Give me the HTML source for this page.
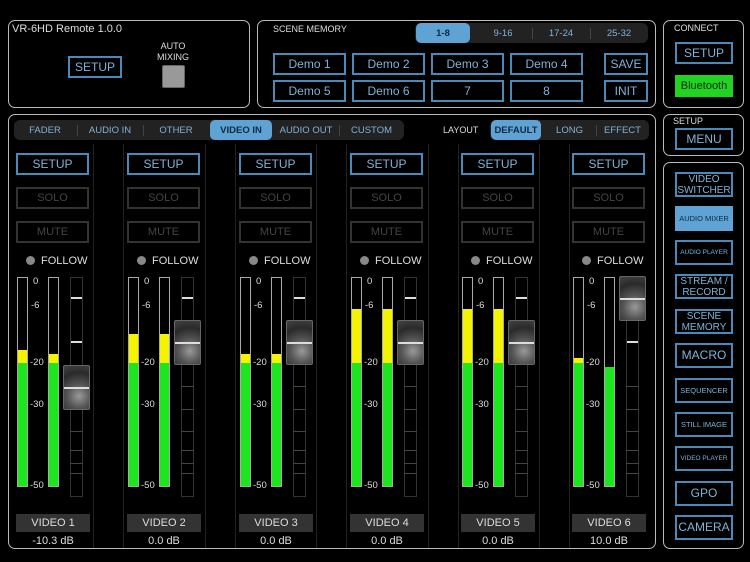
<!DOCTYPE html>
<html><head><meta charset="utf-8"><style>
*{margin:0;padding:0;box-sizing:border-box}
body{width:750px;height:562px;background:#000;position:relative;overflow:hidden;font-family:"Liberation Sans",sans-serif;color:#ddd}
.a{position:absolute}
.box{position:absolute;border:1.5px solid #bbb;border-radius:7px}
.btn{position:absolute;border:2px solid #4a8ab8;color:#7fb2d8;font-size:12px;display:flex;align-items:center;justify-content:center;text-align:center;line-height:11px}
.gbtn{position:absolute;border:2px solid #333;color:#444;font-size:11px;display:flex;align-items:center;justify-content:center}
.lbl{position:absolute;font-size:9px;color:#ddd}
.tabs{position:absolute;background:#222;border-radius:6px;height:20px}
.tab{position:absolute;top:0;height:20px;font-size:9.5px;color:#7fb2d8;display:flex;align-items:center;justify-content:center}
.tab.on{background:#5ea3d4;color:#0c2a44;border-radius:5px;font-weight:bold}
.sep{position:absolute;top:5px;width:1px;height:11px;background:#444}
.ch{position:absolute;top:0;left:0;width:75px;height:562px}
.met{position:absolute;top:277px;width:11px;height:210px;border:1px solid #aaa;background:#000}
.g{position:absolute;left:0;right:0;bottom:0;background:#1ee61e}
.y{position:absolute;left:0;right:0;background:#f4f400}
.sc{position:absolute;font-size:9.5px;color:#ddd}
.trk{position:absolute;left:54px;top:277px;width:13px;height:220px;border:1px solid #333}
.tk{position:absolute;left:54px;width:13px;height:1px;background:#444}
.tw{position:absolute;left:55px;width:11px;height:2px;background:#ddd}
.knob{position:absolute;left:47px;width:27px;height:45px;border-radius:2px;background:radial-gradient(circle at 60% 70%,#999 0,#555 35%,#2a2a2a 70%,#444 100%);border:1px solid #666}
.knob:after{content:"";position:absolute;left:0;right:0;top:21px;height:2px;background:#ddd}
.name{position:absolute;left:0;top:514px;width:74px;height:18px;background:#333;color:#ddd;font-size:11px;display:flex;align-items:center;justify-content:center}
.db{position:absolute;left:0;top:535px;width:74px;text-align:center;font-size:11px;color:#ddd}
.fol{position:absolute;top:255px;left:10px;font-size:11px;color:#ddd}
.fol i{display:inline-block;width:9px;height:9px;border-radius:50%;background:#888;margin-right:6px;vertical-align:-1px}
.vl{position:absolute;top:144px;width:1px;height:404px;background:#222}
</style></head><body>
<div class="box" style="left:8px;top:20px;width:242px;height:88px"></div>
<div class="a" style="left:12px;top:23px;font-size:11px;color:#ddd">VR-6HD Remote 1.0.0</div>
<div class="btn" style="left:68px;top:56px;width:54px;height:22px">SETUP</div>
<div class="lbl" style="left:155px;top:41px;width:36px;text-align:center;line-height:11px">AUTO<br>MIXING</div>
<div class="a" style="left:162px;top:65px;width:23px;height:23px;background:#999;border-radius:2px;border:1px solid #666"></div>

<div class="box" style="left:257px;top:20px;width:399px;height:88px"></div>
<div class="lbl" style="left:273px;top:24px">SCENE MEMORY</div>
<div class="tabs" style="left:415px;top:23px;width:233px">
<div class="tab on" style="left:1px;width:54px">1-8</div>
<div class="tab" style="left:59px;width:58px">9-16</div><div class="sep" style="left:117px"></div>
<div class="tab" style="left:117px;width:58px">17-24</div><div class="sep" style="left:175px"></div>
<div class="tab" style="left:175px;width:58px">25-32</div>
</div>
<div class="btn" style="left:273px;top:53px;width:73px;height:22px">Demo 1</div>
<div class="btn" style="left:352px;top:53px;width:73px;height:22px">Demo 2</div>
<div class="btn" style="left:431px;top:53px;width:73px;height:22px">Demo 3</div>
<div class="btn" style="left:510px;top:53px;width:73px;height:22px">Demo 4</div>
<div class="btn" style="left:604px;top:53px;width:44px;height:22px">SAVE</div>
<div class="btn" style="left:273px;top:80px;width:73px;height:22px">Demo 5</div>
<div class="btn" style="left:352px;top:80px;width:73px;height:22px">Demo 6</div>
<div class="btn" style="left:431px;top:80px;width:73px;height:22px">7</div>
<div class="btn" style="left:510px;top:80px;width:73px;height:22px">8</div>
<div class="btn" style="left:604px;top:80px;width:44px;height:22px">INIT</div>

<div class="box" style="left:663px;top:20px;width:81px;height:88px"></div>
<div class="lbl" style="left:674px;top:23px">CONNECT</div>
<div class="btn" style="left:675px;top:42px;width:58px;height:22px">SETUP</div>
<div class="a" style="left:675px;top:75px;width:58px;height:22px;background:#22d422;color:#0a2a0a;font-size:11px;display:flex;align-items:center;justify-content:center">Bluetooth</div>

<div class="box" style="left:663px;top:114px;width:81px;height:42px"></div>
<div class="lbl" style="left:673px;top:116px">SETUP</div>
<div class="btn" style="left:675px;top:128px;width:58px;height:22px">MENU</div>

<div class="box" style="left:663px;top:162px;width:81px;height:387px"></div>
<div class="btn" style="left:675px;top:172px;width:58px;height:25px;font-size:10px">VIDEO<br>SWITCHER</div>
<div class="a" style="left:675px;top:206px;width:58px;height:25px;background:#5ea3d4;color:#0c2a44;font-size:7.5px;display:flex;align-items:center;justify-content:center">AUDIO MIXER</div>
<div class="btn" style="left:675px;top:240px;width:58px;height:25px;font-size:6.5px">AUDIO PLAYER</div>
<div class="btn" style="left:675px;top:274px;width:58px;height:25px;font-size:10px">STREAM /<br>RECORD</div>
<div class="btn" style="left:675px;top:309px;width:58px;height:25px;font-size:10px">SCENE<br>MEMORY</div>
<div class="btn" style="left:675px;top:343px;width:58px;height:25px">MACRO</div>
<div class="btn" style="left:675px;top:378px;width:58px;height:25px;font-size:7.5px">SEQUENCER</div>
<div class="btn" style="left:675px;top:412px;width:58px;height:25px;font-size:7.5px">STILL IMAGE</div>
<div class="btn" style="left:675px;top:446px;width:58px;height:25px;font-size:6.5px">VIDEO PLAYER</div>
<div class="btn" style="left:675px;top:481px;width:58px;height:25px">GPO</div>
<div class="btn" style="left:675px;top:515px;width:58px;height:25px">CAMERA</div>

<div class="box" style="left:8px;top:114px;width:648px;height:435px"></div>
<div class="tabs" style="left:14px;top:120px;width:390px">
<div class="tab" style="left:0;width:62px">FADER</div><div class="sep" style="left:63px"></div>
<div class="tab" style="left:63px;width:66px">AUDIO IN</div><div class="sep" style="left:129px"></div>
<div class="tab" style="left:129px;width:66px">OTHER</div>
<div class="tab on" style="left:196px;width:62px">VIDEO IN</div>
<div class="tab" style="left:259px;width:66px">AUDIO OUT</div><div class="sep" style="left:325px"></div>
<div class="tab" style="left:325px;width:65px">CUSTOM</div>
</div>
<div class="lbl" style="left:443px;top:125px">LAYOUT</div>
<div class="tabs" style="left:490px;top:120px;width:159px">
<div class="tab on" style="left:1px;width:50px">DEFAULT</div>
<div class="tab" style="left:53px;width:53px">LONG</div><div class="sep" style="left:106px"></div>
<div class="tab" style="left:106px;width:53px">EFFECT</div>
</div>

<div class="vl" style="left:93px"></div><div class="vl" style="left:123px"></div>
<div class="vl" style="left:205px"></div><div class="vl" style="left:235px"></div>
<div class="vl" style="left:316px"></div><div class="vl" style="left:346px"></div>
<div class="vl" style="left:428px"></div><div class="vl" style="left:458px"></div>
<div class="vl" style="left:539px"></div><div class="vl" style="left:569px"></div>

<!-- channel template repeated -->
<div class="ch" style="left:16px">
<div class="btn" style="left:0;top:153px;width:73px;height:22px">SETUP</div>
<div class="gbtn" style="left:0;top:187px;width:73px;height:22px">SOLO</div>
<div class="gbtn" style="left:0;top:221px;width:73px;height:22px">MUTE</div>
<div class="fol"><i></i>FOLLOW</div>
<div class="met" style="left:1px"><div class="y" style="top:72px;bottom:0"></div><div class="g" style="top:85px"></div></div>
<div class="met" style="left:32px"><div class="y" style="top:76px;bottom:0"></div><div class="g" style="top:85px"></div></div>
<div class="sc" style="left:17px;top:276px">0</div><div class="sc" style="left:15px;top:300px">-6</div><div class="sc" style="left:14px;top:357px">-20</div><div class="sc" style="left:14px;top:399px">-30</div><div class="sc" style="left:14px;top:480px">-50</div>
<div class="trk"></div><div class="tw" style="top:297px"></div><div class="tw" style="top:341px"></div>
<div class="tk" style="top:431px"></div><div class="tk" style="top:450px"></div><div class="tk" style="top:463px"></div><div class="tk" style="top:473px"></div>
<div class="knob" style="top:365px"></div>
<div class="name">VIDEO 1</div><div class="db">-10.3 dB</div>
</div>

<div class="ch" style="left:127px">
<div class="btn" style="left:0;top:153px;width:73px;height:22px">SETUP</div>
<div class="gbtn" style="left:0;top:187px;width:73px;height:22px">SOLO</div>
<div class="gbtn" style="left:0;top:221px;width:73px;height:22px">MUTE</div>
<div class="fol"><i></i>FOLLOW</div>
<div class="met" style="left:1px"><div class="y" style="top:56px;bottom:0"></div><div class="g" style="top:85px"></div></div>
<div class="met" style="left:32px"><div class="y" style="top:56px;bottom:0"></div><div class="g" style="top:85px"></div></div>
<div class="sc" style="left:17px;top:276px">0</div><div class="sc" style="left:15px;top:300px">-6</div><div class="sc" style="left:14px;top:357px">-20</div><div class="sc" style="left:14px;top:399px">-30</div><div class="sc" style="left:14px;top:480px">-50</div>
<div class="trk"></div><div class="tw" style="top:297px"></div>
<div class="tk" style="top:386px"></div><div class="tk" style="top:409px"></div><div class="tk" style="top:431px"></div><div class="tk" style="top:450px"></div><div class="tk" style="top:463px"></div><div class="tk" style="top:473px"></div>
<div class="knob" style="top:320px"></div>
<div class="name">VIDEO 2</div><div class="db">0.0 dB</div>
</div>

<div class="ch" style="left:239px">
<div class="btn" style="left:0;top:153px;width:73px;height:22px">SETUP</div>
<div class="gbtn" style="left:0;top:187px;width:73px;height:22px">SOLO</div>
<div class="gbtn" style="left:0;top:221px;width:73px;height:22px">MUTE</div>
<div class="fol"><i></i>FOLLOW</div>
<div class="met" style="left:1px"><div class="y" style="top:76px;bottom:0"></div><div class="g" style="top:85px"></div></div>
<div class="met" style="left:32px"><div class="y" style="top:76px;bottom:0"></div><div class="g" style="top:85px"></div></div>
<div class="sc" style="left:17px;top:276px">0</div><div class="sc" style="left:15px;top:300px">-6</div><div class="sc" style="left:14px;top:357px">-20</div><div class="sc" style="left:14px;top:399px">-30</div><div class="sc" style="left:14px;top:480px">-50</div>
<div class="trk"></div><div class="tw" style="top:297px"></div>
<div class="tk" style="top:386px"></div><div class="tk" style="top:409px"></div><div class="tk" style="top:431px"></div><div class="tk" style="top:450px"></div><div class="tk" style="top:463px"></div><div class="tk" style="top:473px"></div>
<div class="knob" style="top:320px"></div>
<div class="name">VIDEO 3</div><div class="db">0.0 dB</div>
</div>

<div class="ch" style="left:350px">
<div class="btn" style="left:0;top:153px;width:73px;height:22px">SETUP</div>
<div class="gbtn" style="left:0;top:187px;width:73px;height:22px">SOLO</div>
<div class="gbtn" style="left:0;top:221px;width:73px;height:22px">MUTE</div>
<div class="fol"><i></i>FOLLOW</div>
<div class="met" style="left:1px"><div class="y" style="top:31px;bottom:0"></div><div class="g" style="top:85px"></div></div>
<div class="met" style="left:32px"><div class="y" style="top:31px;bottom:0"></div><div class="g" style="top:85px"></div></div>
<div class="sc" style="left:17px;top:276px">0</div><div class="sc" style="left:15px;top:300px">-6</div><div class="sc" style="left:14px;top:357px">-20</div><div class="sc" style="left:14px;top:399px">-30</div><div class="sc" style="left:14px;top:480px">-50</div>
<div class="trk"></div><div class="tw" style="top:297px"></div>
<div class="tk" style="top:386px"></div><div class="tk" style="top:409px"></div><div class="tk" style="top:431px"></div><div class="tk" style="top:450px"></div><div class="tk" style="top:463px"></div><div class="tk" style="top:473px"></div>
<div class="knob" style="top:320px"></div>
<div class="name">VIDEO 4</div><div class="db">0.0 dB</div>
</div>

<div class="ch" style="left:461px">
<div class="btn" style="left:0;top:153px;width:73px;height:22px">SETUP</div>
<div class="gbtn" style="left:0;top:187px;width:73px;height:22px">SOLO</div>
<div class="gbtn" style="left:0;top:221px;width:73px;height:22px">MUTE</div>
<div class="fol"><i></i>FOLLOW</div>
<div class="met" style="left:1px"><div class="y" style="top:31px;bottom:0"></div><div class="g" style="top:85px"></div></div>
<div class="met" style="left:32px"><div class="y" style="top:31px;bottom:0"></div><div class="g" style="top:85px"></div></div>
<div class="sc" style="left:17px;top:276px">0</div><div class="sc" style="left:15px;top:300px">-6</div><div class="sc" style="left:14px;top:357px">-20</div><div class="sc" style="left:14px;top:399px">-30</div><div class="sc" style="left:14px;top:480px">-50</div>
<div class="trk"></div><div class="tw" style="top:297px"></div>
<div class="tk" style="top:386px"></div><div class="tk" style="top:409px"></div><div class="tk" style="top:431px"></div><div class="tk" style="top:450px"></div><div class="tk" style="top:463px"></div><div class="tk" style="top:473px"></div>
<div class="knob" style="top:320px"></div>
<div class="name">VIDEO 5</div><div class="db">0.0 dB</div>
</div>

<div class="ch" style="left:572px">
<div class="btn" style="left:0;top:153px;width:73px;height:22px">SETUP</div>
<div class="gbtn" style="left:0;top:187px;width:73px;height:22px">SOLO</div>
<div class="gbtn" style="left:0;top:221px;width:73px;height:22px">MUTE</div>
<div class="fol"><i></i>FOLLOW</div>
<div class="met" style="left:1px"><div class="y" style="top:80px;bottom:0"></div><div class="g" style="top:85px"></div></div>
<div class="met" style="left:32px"><div class="g" style="top:89px"></div></div>
<div class="sc" style="left:17px;top:276px">0</div><div class="sc" style="left:15px;top:300px">-6</div><div class="sc" style="left:14px;top:357px">-20</div><div class="sc" style="left:14px;top:399px">-30</div><div class="sc" style="left:14px;top:480px">-50</div>
<div class="trk"></div><div class="tw" style="top:341px"></div>
<div class="tk" style="top:386px"></div><div class="tk" style="top:409px"></div><div class="tk" style="top:431px"></div><div class="tk" style="top:450px"></div><div class="tk" style="top:463px"></div><div class="tk" style="top:473px"></div>
<div class="knob" style="top:276px"></div>
<div class="name">VIDEO 6</div><div class="db">10.0 dB</div>
</div>
</body></html>
